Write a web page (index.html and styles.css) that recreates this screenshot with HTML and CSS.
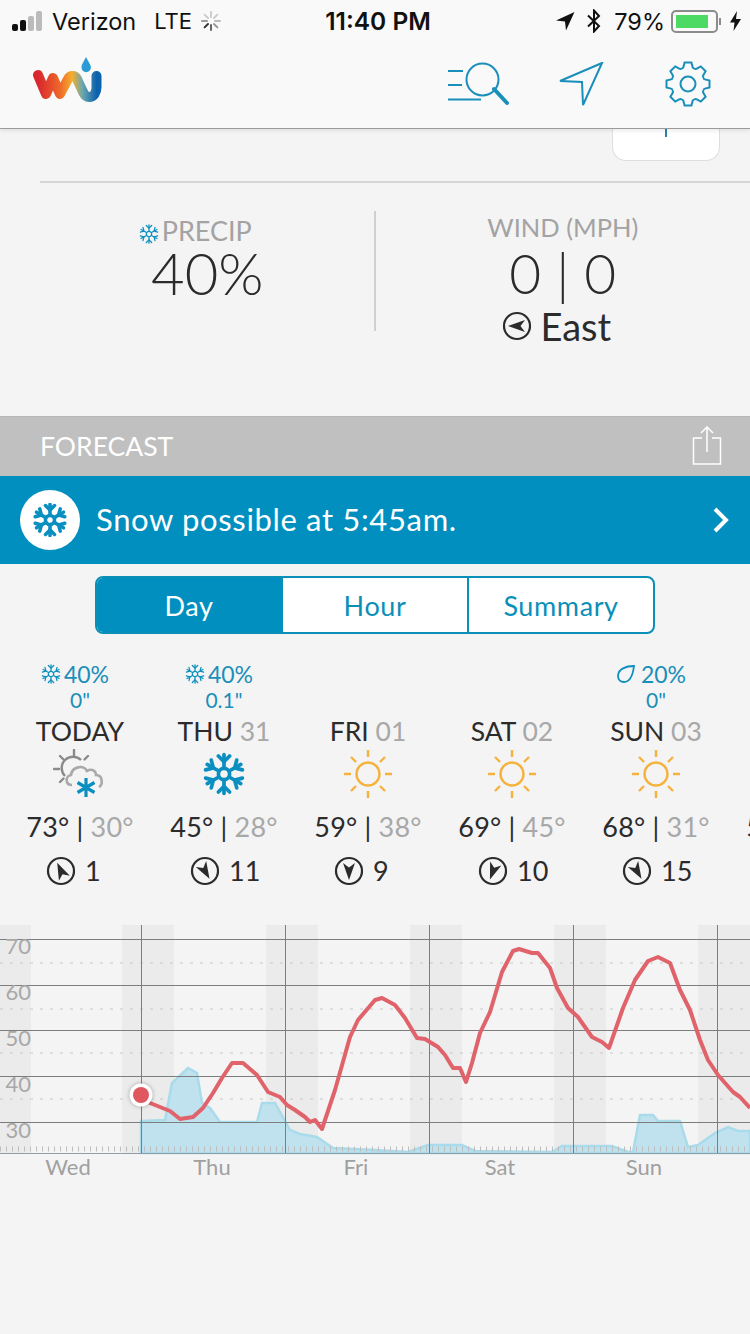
FILE: index.html
```html
<!DOCTYPE html>
<html lang="en">
<head>
  <meta charset="UTF-8">
  <meta name="viewport" content="width=device-width, initial-scale=1.0">
  <title>Forecast</title>
  <link rel="stylesheet" href="styles.css">
</head>
<body>

  <!-- shared icons -->
  <svg class="defs" width="0" height="0">
    <defs>
      <g id="flake" fill="none" stroke="currentColor" stroke-linecap="round">
        <circle cx="0" cy="0" r="3.2"/>
        <g id="arm">
          <path d="M0 -3.4V-11"/>
          <path d="M-3.2 -10.2L0 -7L3.2 -10.2"/>
        </g>
        <use href="#arm" transform="rotate(60)"/>
        <use href="#arm" transform="rotate(120)"/>
        <use href="#arm" transform="rotate(180)"/>
        <use href="#arm" transform="rotate(240)"/>
        <use href="#arm" transform="rotate(300)"/>
      </g>
      <g id="sun" fill="none" stroke="#f5b23d" stroke-width="2.4">
        <circle cx="0" cy="0" r="11.5"/>
        <path d="M0 -24V-17M0 24V17M-24 0H-17M24 0H17"/>
        <path d="M-17 -17L-12 -12M17 -17L12 -12M-17 17L-12 12M17 17L12 12"/>
      </g>
      <g id="wind">
        <circle cx="0" cy="0" r="13" fill="none" stroke="#2b2b2b" stroke-width="2.2"/>
      </g>
      <path id="dart" d="M0 -9L6 8L0 3.5L-6 8Z" fill="#2b2b2b"/>
      <path id="tooth" d="M-6.6 -15.800Q-5 -15.400 -4.600 -17L-3.400 -21.500H3.400L4.600 -17Q5 -15.400 6.600 -15.800"/>
    </defs>
  </svg>

  <div class="topbar">
    <div class="status">
      <div class="status-left">
        <span class="signal"><i class="on"></i><i class="on"></i><i></i><i></i></span>
        <span>Verizon</span>
        <span class="lte">LTE</span>
        <svg class="spinner" width="20" height="20" viewBox="-10 -10 20 20" stroke-width="2" stroke-linecap="round">
          <path d="M0 -9V-4" stroke="#ccc"/>
          <path d="M6.4 -6.4L3 -3" stroke="#ccc"/>
          <path d="M9 0H4" stroke="#bbb"/>
          <path d="M6.4 6.4L3 3" stroke="#999"/>
          <path d="M0 9V4" stroke="#666"/>
          <path d="M-6.4 6.4L-3 3" stroke="#333"/>
          <path d="M-9 0H-4" stroke="#999"/>
          <path d="M-6.4 -6.4L-3 -3" stroke="#ccc"/>
        </svg>
      </div>
      <div class="status-time">11:40 PM</div>
      <div class="status-right">
        <svg width="20" height="20" viewBox="0 0 20 20"><path d="M19.5 1L1 9.500L10 10.500L11 19.500Z" fill="#111"/></svg>
        <svg class="bt" width="14" height="24" viewBox="0 0 14 24" fill="none" stroke="#111" stroke-width="2"><path d="M1 6.500L12 17L7 22.500V1.500L12 7L1 17.500"/></svg>
        <span class="pct">79%</span>
        <span class="battery"><span class="level"></span></span>
        <span class="nub"></span>
        <svg width="11" height="20" viewBox="0 0 11 20"><path d="M7 0L0 11.500H4.500L3.500 20L11 8H6Z" fill="#111"/></svg>
      </div>
    </div>
    <div class="toolbar">
      <svg class="logo" width="70" height="48" viewBox="0 0 70 48">
        <defs>
          <linearGradient id="wu" x1="0" x2="1" y1="0" y2="0">
            <stop offset="0" stop-color="#d9262e"/>
            <stop offset="0.38" stop-color="#ee6a2a"/>
            <stop offset="0.58" stop-color="#f6ae2d"/>
            <stop offset="0.76" stop-color="#6aa8ae"/>
            <stop offset="1" stop-color="#0d62ad"/>
          </linearGradient>
        </defs>
        <path d="M6 21L14 40L21 24L28 40L36 25C38 21 43 21 45 25L51 38C53 42 55 43 57 43C62 43 64.500 38 64.500 33V22" fill="none" stroke="url(#wu)" stroke-width="10" stroke-linecap="round" stroke-linejoin="round"/>
        <path d="M54 3C51 9 49.500 10.500 49.500 13.500A4.700 4.700 0 0 0 58.900 13.500C58.900 10.500 57 9 54 3Z" fill="#2a9bd5"/>
      </svg>
      <div class="tools">
        <svg width="62" height="46" viewBox="0 0 62 46" fill="none" stroke="#1a8fba" stroke-width="2">
          <circle cx="35.500" cy="19.500" r="16"/>
          <path d="M1 11H16M1 25H15M1 39.500H34"/>
          <path d="M47 29L60 43" stroke-width="4" stroke-linecap="round"/>
        </svg>
        <svg class="arrow" width="46" height="44" viewBox="0 0 46 44" fill="none" stroke="#1a8fba" stroke-width="2">
          <path d="M44 1L2 19L24 20L25 43Z"/>
        </svg>
        <svg class="gear" width="46" height="46" viewBox="-23 -23 46 46" fill="none" stroke="#1a8fba" stroke-width="2">
          <circle cx="0" cy="0" r="7.500"/>
          <use href="#tooth"/>
          <use href="#tooth" transform="rotate(45)"/>
          <use href="#tooth" transform="rotate(90)"/>
          <use href="#tooth" transform="rotate(135)"/>
          <use href="#tooth" transform="rotate(180)"/>
          <use href="#tooth" transform="rotate(225)"/>
          <use href="#tooth" transform="rotate(270)"/>
          <use href="#tooth" transform="rotate(315)"/>
        </svg>
      </div>
    </div>
  </div>

  <div class="card-end"><span class="tick"></span></div>

  <div class="conditions">
    <div class="stat">
      <div class="stat-label precip-label">
        <svg width="20" height="20" viewBox="-12 -12 24 24" class="flake-sm"><use href="#flake"/></svg>
        PRECIP
      </div>
      <div class="stat-big">40%</div>
    </div>
    <div class="stat stat-right">
      <div class="stat-label">WIND (MPH)</div>
      <div class="stat-big wind-speed">0 | 0</div>
      <div class="stat-dir">
        <svg width="30" height="30" viewBox="-15 -15 30 30"><use href="#wind"/><use href="#dart" transform="rotate(-90)"/></svg>
        East
      </div>
    </div>
  </div>

  <div class="section-bar">
    <span>FORECAST</span>
    <svg width="30" height="40" viewBox="0 0 30 40" fill="none" stroke="#fff" stroke-width="1.500">
      <path d="M10 12H1.500V38H28.500V12H20"/>
      <path d="M15 26V1M9 7L15 1L21 7"/>
    </svg>
  </div>

  <div class="alert">
    <span class="alert-badge">
      <svg width="34" height="34" viewBox="-12 -12 24 24" class="flake-lg"><use href="#flake"/></svg>
    </span>
    <span class="alert-text">Snow possible at 5:45am.</span>
    <svg width="18" height="26" viewBox="0 0 18 26" fill="none" stroke="#fff" stroke-width="4"><path d="M3 2L14 13L3 24"/></svg>
  </div>

  <div class="tabs">
    <div class="tab active">Day</div>
    <div class="tab">Hour</div>
    <div class="tab">Summary</div>
  </div>

  <div class="days">
    <div class="day">
      <div class="prob"><svg width="20" height="20" viewBox="-12 -12 24 24" class="flake-sm"><use href="#flake"/></svg>40%</div>
      <div class="amount">0"</div>
      <div class="day-name">TODAY</div>
      <svg class="day-icon" width="54" height="50" viewBox="0 0 54 50" fill="none">
        <g stroke="#8a8a8a" stroke-width="2.400" stroke-linecap="round">
          <path d="M21 1V6M7 7L10.500 10.500M35 7L31.500 10.500M1 20H6M7 33L10.500 29.500"/>
        </g>
        <path d="M12 27A10.500 10.500 0 0 1 28 11" stroke="#8a8a8a" stroke-width="2.400"/>
        <path d="M19 36C12 36 12 27 18 26C19 18 30 15 34 22C39 19 43 22 43 26C50 26 50 36 46 38" stroke="#a9a9a9" stroke-width="2.600"/>
        <path d="M33 29V48M24.500 33.500L41.500 43.500M41.500 33.500L24.500 43.500" stroke="#0a8fc0" stroke-width="3.200"/>
      </svg>
      <div class="temps">73° <b>|</b> <span class="low">30°</span></div>
      <div class="wind-row"><svg width="30" height="30" viewBox="-15 -15 30 30"><use href="#wind"/><use href="#dart" transform="rotate(-25)"/></svg>1</div>
    </div>

    <div class="day">
      <div class="prob"><svg width="20" height="20" viewBox="-12 -12 24 24" class="flake-sm"><use href="#flake"/></svg>40%</div>
      <div class="amount">0.1"</div>
      <div class="day-name">THU <span class="date">31</span></div>
      <svg class="day-icon flake-day" width="44" height="46" viewBox="-12.500 -13 25 26"><use href="#flake"/></svg>
      <div class="temps">45° <b>|</b> <span class="low">28°</span></div>
      <div class="wind-row"><svg width="30" height="30" viewBox="-15 -15 30 30"><use href="#wind"/><use href="#dart" transform="rotate(150)"/></svg>11</div>
    </div>

    <div class="day">
      <div class="prob"></div>
      <div class="amount"></div>
      <div class="day-name">FRI <span class="date">01</span></div>
      <svg class="day-icon" width="50" height="50" viewBox="-25 -25 50 50"><use href="#sun"/></svg>
      <div class="temps">59° <b>|</b> <span class="low">38°</span></div>
      <div class="wind-row"><svg width="30" height="30" viewBox="-15 -15 30 30"><use href="#wind"/><use href="#dart" transform="rotate(180)"/></svg>9</div>
    </div>

    <div class="day">
      <div class="prob"></div>
      <div class="amount"></div>
      <div class="day-name">SAT <span class="date">02</span></div>
      <svg class="day-icon" width="50" height="50" viewBox="-25 -25 50 50"><use href="#sun"/></svg>
      <div class="temps">69° <b>|</b> <span class="low">45°</span></div>
      <div class="wind-row"><svg width="30" height="30" viewBox="-15 -15 30 30"><use href="#wind"/><use href="#dart" transform="rotate(200)"/></svg>10</div>
    </div>

    <div class="day">
      <div class="prob"><svg class="drop" width="20" height="20" viewBox="0 0 20 20" fill="none" stroke="#0a8fc0" stroke-width="1.800"><path d="M18 2C10 2 2 5 2 12C2 16 5 18 8 18C14 18 17 10 18 2Z"/></svg>20%</div>
      <div class="amount">0"</div>
      <div class="day-name">SUN <span class="date">03</span></div>
      <svg class="day-icon" width="50" height="50" viewBox="-25 -25 50 50"><use href="#sun"/></svg>
      <div class="temps">68° <b>|</b> <span class="low">31°</span></div>
      <div class="wind-row"><svg width="30" height="30" viewBox="-15 -15 30 30"><use href="#wind"/><use href="#dart" transform="rotate(150)"/></svg>15</div>
    </div>

    <div class="day">
      <div class="prob"></div>
      <div class="amount"></div>
      <div class="day-name"></div>
      <div class="day-gap"></div>
      <div class="temps">58° <b>|</b> <span class="low">33°</span></div>
    </div>
  </div>

  <!-- temperature (red) and precip chance (blue) over five days -->
  <svg class="chart" width="750" height="270" viewBox="0 920 750 270">
    <g fill="#ebebeb">
      <rect x="0" y="925" width="31" height="228"/>
      <rect x="122" y="925" width="52" height="228"/>
      <rect x="266" y="925" width="52" height="228"/>
      <rect x="410" y="925" width="52" height="228"/>
      <rect x="554" y="925" width="52" height="228"/>
      <rect x="698" y="925" width="52" height="228"/>
    </g>
    <path d="M0 963H750M0 1009H750M0 1053H750M0 1099H750" stroke="#c8c8c8" stroke-width="1.200" stroke-dasharray="3 7"/>
    <path d="M141 1121L165 1120L172 1083L188 1068L197 1073L202 1103L210 1108L220 1122L257 1122L262 1103L275 1103L290 1130L300 1134L317 1137L333 1148L375 1150L408 1152L428 1145L462 1145L475 1151L552 1152L562 1146L612 1146L628 1152L633 1152L640 1115L653 1115L658 1121L680 1121L688 1147L698 1145L715 1133L728 1127L738 1131L750 1131V1153H141Z" fill="#bfe2ee" stroke="#a9dbea" stroke-width="2.500"/>
    <g stroke="#7d7d7d" stroke-width="1">
      <path d="M0 939.500H750M0 985.500H750M0 1030.500H750M0 1076.500H750M0 1122.500H750"/>
      <path d="M141.500 925V1153M285.500 925V1153M429.500 925V1153M573.500 925V1153M717.500 925V1153"/>
    </g>
    <path d="M0 1149H750" stroke="#bdbdbd" stroke-width="5" stroke-dasharray="1 5" fill="none"/>
    <path d="M0 1153.500H750" stroke="#8f9ea4" stroke-width="1"/>
    <path d="M141 1095L150 1103L170 1111L180 1119L193 1117L203 1108L213 1093L222 1078L232 1063L243 1063L257 1075L268 1092L280 1097L287 1105L295 1110L305 1117L310 1122L315 1120L322 1129L335 1090L350 1037L358 1020L375 1000L382 998L395 1005L405 1018L417 1038L425 1039L438 1047L445 1055L453 1068L460 1068L466 1082L472 1063L480 1033L490 1012L502 972L513 951L519 949L532 953L538 953L550 968L557 988L568 1008L578 1017L592 1037L602 1042L609 1048L623 1008L635 980L648 961L658 957L670 963L680 990L690 1010L700 1040L708 1060L718 1075L733 1092L740 1097L750 1108" fill="none" stroke="#e0636b" stroke-width="4" stroke-linejoin="round"/>
    <circle class="marker" cx="141" cy="1095" r="11.500" fill="#fff"/>
    <circle cx="141" cy="1095" r="8" fill="#e0575f"/>
    <g class="axis-y">
      <text x="31" y="954">70</text>
      <text x="31" y="1000">60</text>
      <text x="31" y="1046">50</text>
      <text x="31" y="1092">40</text>
      <text x="31" y="1138">30</text>
    </g>
    <g class="axis-x">
      <text x="68" y="1175">Wed</text>
      <text x="212" y="1175">Thu</text>
      <text x="356" y="1175">Fri</text>
      <text x="500" y="1175">Sat</text>
      <text x="644" y="1175">Sun</text>
    </g>
  </svg>

</body>
</html>
```

FILE: styles.css
```css
body {
  font-family: "Lato", "Open Sans", sans-serif;
  background-color: #f4f4f4;
  color: #2b2b2b;
  margin: 0;
  padding: 0;
  width: 750px;
  height: 1334px;
  overflow: hidden;
}

.defs {
  display: block;
  height: 0;
}

.flake-sm,
.flake-lg,
.flake-day {
  color: #0a8fc0;
}

.flake-sm { stroke-width: 1.5; }
.flake-lg { stroke-width: 2.5; }
.flake-day { stroke-width: 2.1; }

/* status bar + app toolbar */
.topbar {
  height: 128px;
  background-color: #f9f9f9;
  border-bottom: 1px solid #9b9b9b;
  box-shadow: 0 2px 4px rgba(0, 0, 0, 0.08);
  position: relative;
}

.status {
  height: 40px;
  box-sizing: border-box;
  padding: 2px 9px 0 12px;
  display: grid;
  grid-template-columns: 1fr auto 1fr;
  align-items: center;
  font-family: "Inter", "Roboto", sans-serif;
  font-size: 23.5px;
  color: #111;
}

.status-left {
  display: flex;
  align-items: center;
}

.signal {
  display: flex;
  align-items: flex-end;
  gap: 2px;
  height: 20px;
  margin-right: 10px;
}

.signal i {
  width: 6px;
  border-radius: 2px;
  background-color: #bbb;
}

.signal i:nth-child(1) { height: 7px; }
.signal i:nth-child(2) { height: 11px; }
.signal i:nth-child(3) { height: 15px; }
.signal i:nth-child(4) { height: 20px; }
.signal .on { background-color: #111; }

.lte {
  margin-left: 18px;
  margin-right: 9px;
  font-size: 22px;
}

.status-time {
  font-weight: 600;
  font-size: 24.5px;
  padding-left: 3px;
}

.status-right {
  display: flex;
  align-items: center;
  justify-content: flex-end;
}

.status-right .bt {
  margin-left: 12px;
}

.pct {
  margin-left: 13px;
}

.battery {
  width: 47px;
  height: 23px;
  box-sizing: border-box;
  margin-left: 6px;
  padding: 3px;
  border: 2px solid #8c8c8c;
  border-radius: 5px;
}

.level {
  display: block;
  width: 32px;
  height: 13px;
  background-color: #4cd964;
}

.nub {
  width: 2px;
  height: 7px;
  margin: 0 9px 0 1px;
  background-color: #8c8c8c;
}

.toolbar {
  height: 88px;
  box-sizing: border-box;
  display: flex;
  align-items: flex-start;
  justify-content: space-between;
  padding: 14px 39px 0 32px;
}

.tools {
  display: flex;
  align-items: flex-start;
  margin-top: 6px;
}

.arrow {
  margin: 2px 0 0 49px;
}

.gear {
  margin: 1px 0 0 61px;
}

/* bottom of the card scrolled under the toolbar */
.card-end {
  width: 108px;
  height: 32px;
  box-sizing: border-box;
  margin-left: 612px;
  display: flex;
  justify-content: center;
  background-color: #fff;
  border: 1px solid #dedede;
  border-top: none;
  border-radius: 0 0 14px 14px;
}

.tick {
  width: 2px;
  height: 8px;
  background-color: #2a7fb0;
}

.conditions {
  margin: 20px 0 0 40px;
  height: 235px;
  box-sizing: border-box;
  padding-top: 28px;
  border-top: 2px solid #d6d6d6;
  display: flex;
  align-items: flex-start;
}

.stat {
  width: 335px;
  height: 120px;
  text-align: center;
}

.stat-right {
  width: 375px;
  border-left: 2px solid #d0d0d0;
  margin-left: -1px;
}

.stat-label {
  font-size: 27px;
  line-height: 26px;
  color: #a3a3a3;
  margin-top: 7px;
  padding-right: 24px;
}

.stat-right .stat-label {
  font-size: 25.5px;
  margin-top: 3px;
  padding-right: 0;
}

.precip-label svg {
  vertical-align: -3px;
  margin-right: -4px;
}

.stat-big {
  font-size: 58px;
  font-weight: 300;
  line-height: 58px;
  margin-top: 0;
}

.wind-speed {
  font-size: 55px;
  line-height: 60px;
  margin-top: 3px;
}

.stat-dir {
  font-size: 38px;
  line-height: 48px;
  display: flex;
  align-items: center;
  justify-content: center;
  gap: 8px;
  margin-top: -1px;
  padding-right: 12px;
}

.section-bar {
  height: 60px;
  box-sizing: border-box;
  padding: 0 28px 2px 40px;
  background-color: #c0c0c0;
  border-top: 1px solid #b5b5b5;
  color: #fff;
  font-size: 26.5px;
  display: flex;
  align-items: center;
  justify-content: space-between;
}

.alert {
  height: 88px;
  background-color: #008fbf;
  color: #fff;
  display: flex;
  align-items: center;
  padding: 0 20px;
}

.alert-badge {
  width: 60px;
  height: 60px;
  border-radius: 50%;
  background-color: #fff;
  display: flex;
  align-items: center;
  justify-content: center;
}

.alert-text {
  flex: 1;
  margin: -2px 0 0 16px;
  font-size: 31px;
  letter-spacing: 0.65px;
}

.tabs {
  width: 560px;
  height: 58px;
  box-sizing: border-box;
  margin: 12px 0 0 95px;
  display: flex;
  border: 2px solid #0a8fb8;
  border-radius: 8px;
  overflow: hidden;
  background-color: #fff;
}

.tab {
  flex: 1;
  text-align: center;
  font-size: 27px;
  letter-spacing: 0.6px;
  line-height: 56px;
  color: #0a8fb8;
  border-left: 2px solid #0a8fb8;
}

.tab:first-child {
  border-left: none;
}

.tab.active {
  flex: none;
  width: 184px;
  background-color: #008fbf;
  color: #fff;
}

.days {
  display: flex;
  margin-top: 27px;
  padding-left: 8px;
  height: 232px;
  overflow: hidden;
  width: 750px;
  box-sizing: border-box;
}

.day {
  width: 144px;
  flex-shrink: 0;
  text-align: center;
}

.prob {
  height: 26px;
  box-sizing: border-box;
  padding-right: 10px;
  font-size: 23px;
  line-height: 26px;
  color: #1a8fba;
  display: flex;
  align-items: center;
  justify-content: center;
}

.prob svg {
  margin-right: 3px;
}

.prob .drop {
  margin-right: 5px;
}

.amount {
  height: 26px;
  font-size: 21px;
  line-height: 26px;
  color: #1a8fba;
}

.day-name {
  height: 34px;
  margin-top: 2px;
  font-size: 26.5px;
  line-height: 32px;
}

.date,
.low {
  color: #a8a8a8;
}

.day-icon {
  display: block;
  margin: 0 auto;
  height: 50px;
}

.day-gap {
  height: 50px;
}

.temps {
  margin-top: 11px;
  height: 34px;
  font-size: 27px;
  letter-spacing: 0.2px;
  line-height: 34px;
}

.temps b {
  font-weight: 400;
}

.wind-row {
  margin-top: 11px;
  height: 32px;
  box-sizing: border-box;
  padding-left: 38px;
  font-size: 27px;
  line-height: 32px;
  display: flex;
  align-items: center;
  gap: 9px;
}

.chart {
  display: block;
  margin-top: 27px;
}

.marker {
  filter: drop-shadow(0 0 2px rgba(0, 0, 0, 0.3));
}

.axis-y text {
  font-size: 22px;
  fill: #a8a8a8;
  text-anchor: end;
}

.axis-x text {
  font-size: 22px;
  fill: #a0a0a0;
  text-anchor: middle;
}
```
